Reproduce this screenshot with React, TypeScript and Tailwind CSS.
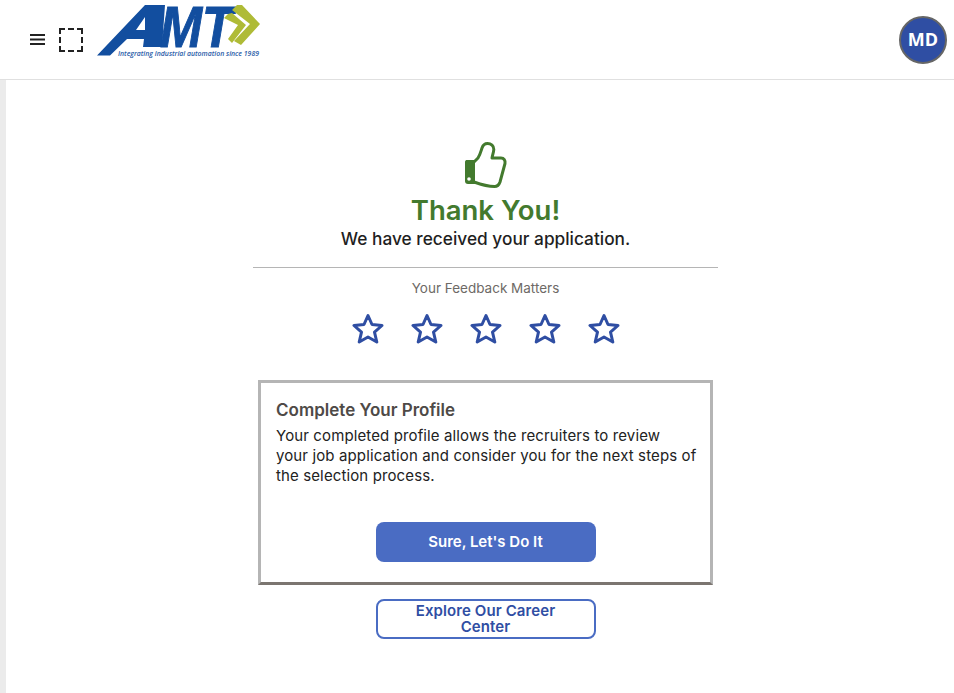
const font = { fontFamily: 'Inter, sans-serif' };

function Logo() {
  return (
    <svg width="166" height="58" viewBox="0 0 166 58" className="block overflow-visible">
      <path
        fillRule="evenodd"
        d="M0 55.5 L48 5 L68 5 L65 47 L46 47 L47 39 L30 39 L13 55.5 Z M39 30 L48 17 L48 30 Z"
        fill="#124e9f"
      />
      <text x="63" y="46.5" fontFamily="Liberation Sans, sans-serif" fontSize="57" fontWeight="700" fontStyle="italic" fill="#124e9f" stroke="#124e9f" strokeWidth="1" textLength="73" lengthAdjust="spacingAndGlyphs">
        MT
      </text>
      <polygon points="140,5 145,5 163,24 144,45 137,41 153,24 135,10" fill="#afbb36" />
      <polygon points="135,13 149,25 135,43 131,39 141,25 127,18 131,14" fill="#afbb36" />
      <text x="21" y="56" fontFamily="Open Sans, sans-serif" fontSize="7" fontWeight="600" fontStyle="italic" fill="#2a5ca8" textLength="141" lengthAdjust="spacingAndGlyphs">
        Integrating industrial automation since 1989
      </text>
    </svg>
  );
}

function MenuIcon() {
  return (
    <svg width="15" height="11" viewBox="0 0 15 11" fill="#222" className="block">
      <rect y="0" width="15" height="2" />
      <rect y="4.5" width="15" height="2" />
      <rect y="9" width="15" height="2" />
    </svg>
  );
}

function ThumbsUp() {
  return (
    <svg width="44" height="46" viewBox="0 0 44 46" fill="none" className="block">
      <path
        d="M10 20 L14 16 C16 13 17 9 18 6 C19 3 21 1.5 23.5 1.5 C27 1.5 30 4 29.8 7.5 C29.6 10.5 28.5 13 28 16 L37 16 C40 16 41.5 18.5 41 21.5 L36 40 C35 43 33.5 44.5 30.5 44.5 C24 44.5 17 42.5 10 40"
        stroke="#437a2e"
        strokeWidth="3"
        strokeLinejoin="round"
        strokeLinecap="round"
      />
      <path d="M1 20 C1 18.5 2 18 3 18 L11 18 L11 42 L4 42 C2 42 1 41 1 39 Z" fill="#437a2e" />
      <circle cx="5" cy="37" r="1.8" fill="#fff" />
    </svg>
  );
}

function Star() {
  return (
    <svg width="32" height="32" viewBox="0 0 32 32" fill="none" className="block">
      <polygon points="16,2.5 20,11.5 30,12.5 22.5,19.2 24.8,29 16,24 7.2,29 9.5,19.2 2,12.5 12,11.5" stroke="#2f4ea3" strokeWidth="3" strokeLinejoin="round" />
    </svg>
  );
}

export default function App() {
  return (
    <div className="flex h-[693px] flex-col overflow-hidden bg-white" style={font}>
      <header className="flex h-20 shrink-0 items-center border-b border-[#e0e0e0] pl-[30px] pr-[7px]">
        <MenuIcon />
        <div className="ml-[14px] h-[24px] w-[24px] border-2 border-dashed border-[#222]" />
        <div className="mb-[22px] ml-[14px]">
          <Logo />
        </div>
        <div className="ml-auto flex h-12 w-12 items-center justify-center rounded-full border-[2.5px] border-[#666] bg-[#2f4ea3] text-[18px] font-bold text-white" style={{ fontFamily: 'Open Sans, sans-serif' }}>
          MD
        </div>
      </header>

      <div className="flex flex-1">
        <div className="w-[6px] bg-[#ebebeb]" />
        <main className="ml-[247px] flex w-[465px] flex-col items-center">
          <div className="mt-[62px]">
            <ThumbsUp />
          </div>
          <h1 className="mt-[2px] text-[27.5px] font-semibold leading-[40px] text-[#437a2e]">Thank You!</h1>
          <p className="mt-[-1px] text-[17.3px] font-medium leading-[20px] text-[#1f1f1f]">We have received your application.</p>
          <div className="mt-[18px] h-px w-full bg-[#b5b5b5]" />
          <p className="mt-[11px] text-[13.5px] leading-[18px] text-[#6e6a66]">Your Feedback Matters</p>
          <div className="mt-[16px] flex gap-[27px]">
            <Star />
            <Star />
            <Star />
            <Star />
            <Star />
          </div>
          <section className="mt-[35px] flex h-[205px] w-[455px] flex-col items-center border-[3px] border-[#b5b5b5] border-b-[#7b7570] pl-[15px] pr-[12px] pt-[16px]">
            <h2 className="w-full text-[17px] font-semibold leading-[22px] text-[#4e4a47]">Complete Your Profile</h2>
            <p className="mt-[5px] w-full text-[15px] leading-[20px] tracking-[0.12px] text-[#222]">
              Your completed profile allows the recruiters to review
              <br />
              your job application and consider you for the next steps of the selection process.
            </p>
            <button className="mt-[36px] ml-[-3px] h-10 w-[220px] shrink-0 rounded-lg bg-[#4a6cc3] text-[15px] font-semibold text-white">
              Sure, Let's Do It
            </button>
          </section>
          <button className="mt-[14px] h-10 w-[220px] rounded-lg border-2 border-[#4a6cc3] px-6 text-[15px] font-semibold leading-[16px] tracking-[0.1px] text-[#2f4ea3]">
            Explore Our Career Center
          </button>
        </main>
      </div>
    </div>
  );
}
